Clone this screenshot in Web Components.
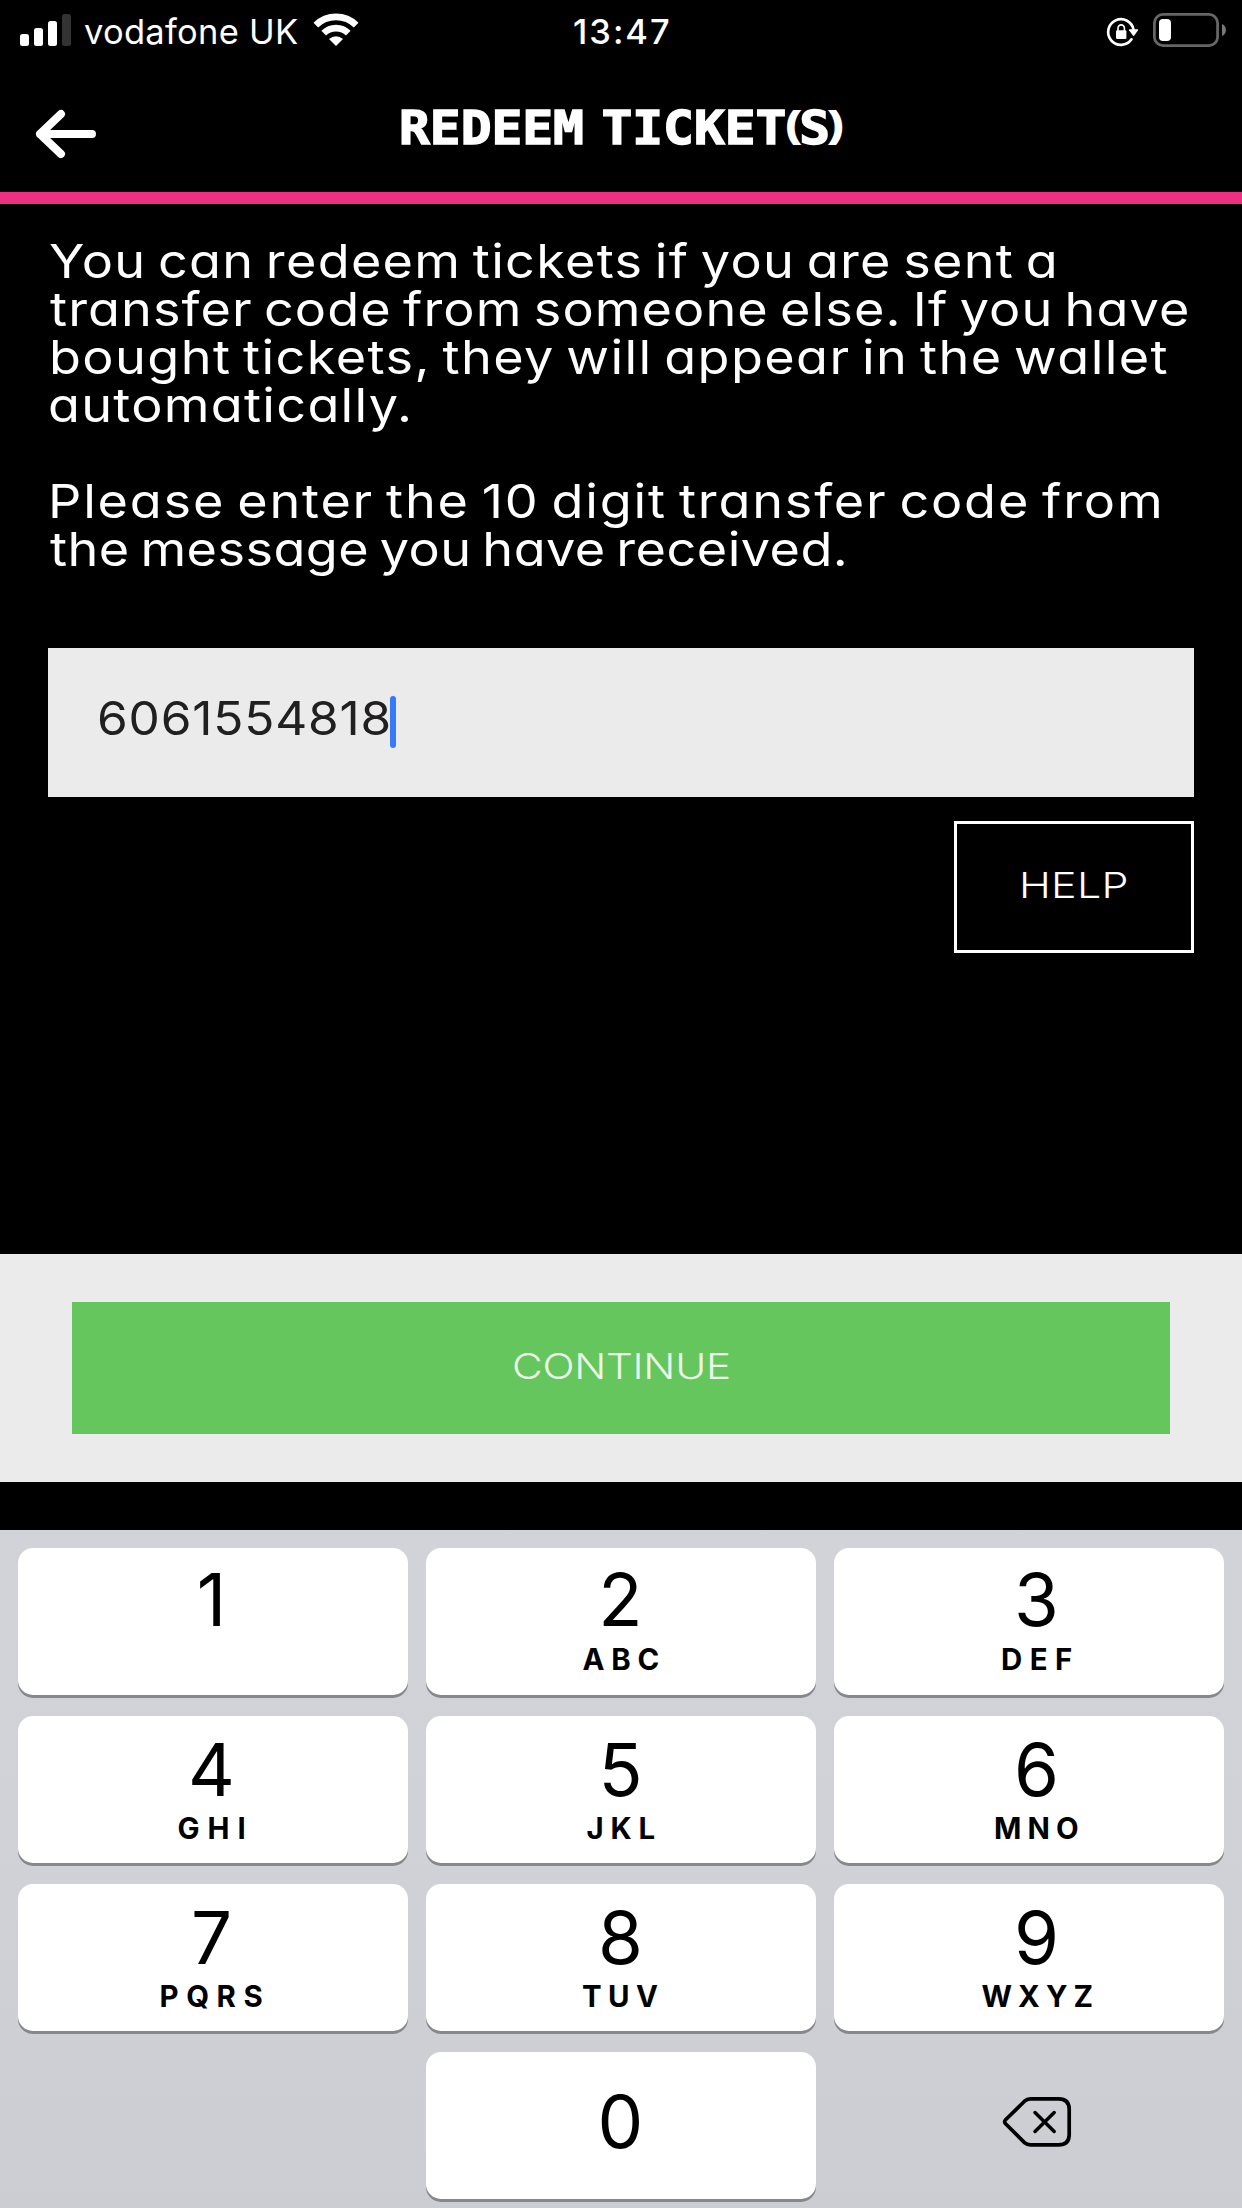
<!DOCTYPE html>
<html lang="en">
<head>
<meta charset="utf-8">
<title>Redeem ticket(s)</title>
<style>
  html, body { margin: 0; padding: 0; background: #000; }
  body { width: 1242px; height: 2208px; overflow: hidden; font-family: Inter, "Liberation Sans", sans-serif; }
</style>
</head>
<body>
<redeem-screen></redeem-screen>

<script>
const define = (name, html, setup) => {
  const tpl = document.createElement('template');
  tpl.innerHTML = html;
  customElements.define(name, class extends HTMLElement {
    constructor() {
      super();
      this.attachShadow({ mode: 'open' }).append(tpl.content.cloneNode(true));
    }
    connectedCallback() { if (setup) setup(this, this.shadowRoot); }
  });
};

/* One line of text tracked so that its ink spans exactly `width` pixels. */
const ctx = document.createElement('canvas').getContext('2d');
define('fit-text', `
  <style>
    :host { display: block; white-space: nowrap; flex: none; }
    span { display: inline-block; transform-origin: 0 50%; }
  </style>
  <span><slot></slot></span>`,
  (el, root) => {
    const span = root.querySelector('span');
    const text = el.textContent;
    const target = +el.getAttribute('width');
    const stretch = +(el.getAttribute('stretch') || 1);
    const cs = getComputedStyle(el);
    ctx.font = `${cs.fontWeight} ${cs.fontSize} ${cs.fontFamily}`;
    const m = ctx.measureText(text);
    const left = -m.actualBoundingBoxLeft;
    const right = m.width - m.actualBoundingBoxRight;
    const ink = span.getBoundingClientRect().width - left - right;
    if (text.length > 1) span.style.letterSpacing = (target / stretch - ink) / (text.length - 1) + 'px';
    span.style.marginLeft = -left * stretch + 'px';
    if (stretch !== 1) span.style.transform = `scaleX(${stretch})`;
    el.style.width = target + 'px';
  });

define('status-bar', `
  <style>
    :host { display: flex; height: 64px; color: #fff; font-size: 34.5px; line-height: 63px; }
    .left { display: flex; width: 574px; padding-left: 20px; box-sizing: border-box; }
    svg { display: block; flex: none; }
    .carrier { margin-left: 12px; }
    .wifi { margin-left: 14px; }
    .time { font-weight: 500; }
    .right { margin-left: auto; display: flex; }
  </style>
  <div class="left">
    <svg width="52" height="64" viewBox="20 0 52 64">
      <g fill="#fff"><rect x="20" y="34" width="9" height="12" rx="2.5"/><rect x="34" y="28" width="9" height="18" rx="2.5"/><rect x="48" y="21" width="9" height="25" rx="2.5"/></g>
      <rect x="62" y="14" width="9" height="32" rx="2.5" fill="#333"/>
    </svg>
    <fit-text class="carrier" width="214">vodafone UK</fit-text>
    <svg class="wifi" width="48" height="64" viewBox="312 0 48 64">
      <g fill="none" stroke="#fff" stroke-width="6.6">
        <path d="M315.8 25.1A28.9 28.9 0 0 1 356.2 25.1"/>
        <path d="M323.7 33.2A17.5 17.5 0 0 1 348.3 33.2"/>
      </g>
      <path d="M336 46L329 38.9Q336 33.4 343 38.9Z" fill="#fff"/>
    </svg>
  </div>
  <fit-text class="time" width="95">13:47</fit-text>
  <div class="right">
    <svg width="142" height="64" viewBox="1100 0 142 64">
      <path d="M1133.6 30A12.8 12.8 0 1 0 1131.5 39.3" fill="none" stroke="#fff" stroke-width="2.7" stroke-linecap="round"/>
      <path d="M1129.6 29.2H1137.4Q1138.6 29.4 1138 30.3L1134.3 35.6Q1133.6 36.4 1132.9 35.6L1129 30.3Q1128.6 29.4 1129.6 29.2Z" fill="#fff"/>
      <rect x="1116" y="30.3" width="10.4" height="8.8" rx="1.3" fill="#fff"/>
      <path d="M1118 31V28.3A3.2 3.4 0 0 1 1124.4 28.3V31" fill="none" stroke="#fff" stroke-width="1.6"/>
      <rect x="1154.4" y="14.4" width="63.2" height="31.2" rx="8.6" fill="none" stroke="#666" stroke-width="2.8"/>
      <rect x="1159" y="19" width="12" height="22" rx="4" fill="#fff"/>
      <path d="M1222 24C1227.3 26 1227.3 34 1222 36Z" fill="#777"/>
    </svg>
  </div>`);

define('nav-header', `
  <style>
    :host { display: flex; height: 128px; border-bottom: 12px solid #ed3082; color: #fff; }
    .back { display: block; flex: none; margin-left: 30px; }
    .title { margin-left: 300px; font: bold 46.2px/128px "DejaVu Sans Mono", monospace; word-spacing: -12px; -webkit-text-stroke: 1.4px #fff; }
    .paren { font: bold 35px/0 "Liberation Sans", sans-serif; vertical-align: 7.5px; -webkit-text-stroke: 2px #fff; }
  </style>
  <svg class="back" width="72" height="128" viewBox="30 64 72 128">
    <path d="M92 134H40M61 114L40 134L61 154" fill="none" stroke="#fff" stroke-width="8" stroke-linecap="round" stroke-linejoin="round"/>
  </svg>
  <fit-text class="title" width="432" stretch="1.11">REDEEM TICKET<span class="paren">(</span>S<span class="paren">)</span></fit-text>`);

define('intro-copy', `
  <style>
    :host { display: block; padding: 33px 0 0 50px; color: #fff; font-size: 46.6px; line-height: 48px; word-spacing: -4px; font-feature-settings: "cv11"; }
    .in { margin-left: 2.5px; }
    .gap { margin-top: 48px; }
  </style>
  <fit-text width="1004" stretch="1.12">You can redeem tickets if you are sent a</fit-text>
  <fit-text width="1137" stretch="1.12">transfer code from someone else. If you have</fit-text>
  <fit-text class="in" width="1115" stretch="1.12">bought tickets, they will appear in the wallet</fit-text>
  <fit-text width="358" stretch="1.12">automatically.</fit-text>
  <fit-text class="in gap" width="1107" stretch="1.12">Please enter the 10 digit transfer code from</fit-text>
  <fit-text width="794" stretch="1.12">the message you have received.</fit-text>`);

define('code-field', `
  <style>
    :host { display: flex; align-items: center; box-sizing: border-box; height: 149px; margin: 0 48px; padding: 0 0 9px 51px; background: #ebebeb; color: #202020; font-size: 46.8px; line-height: 60px; }
    i { width: 6px; height: 52px; border-radius: 3px; background: #367af7; margin: 8px 0 0 1px; }
  </style>
  <fit-text width="290" stretch="1.06">6061554818</fit-text><i></i>`);

define('outline-button', `
  <style>
    :host { display: flex; justify-content: center; align-items: center; box-sizing: border-box; width: 240px; height: 132px; border: 3px solid #fff; padding: 0 0 5px 1px; color: #fff; font-size: 35.8px; line-height: 48px; font-weight: 350; }
  </style>
  <slot></slot>`);

define('action-footer', `
  <style>
    :host { display: flex; box-sizing: border-box; height: 228px; background: #ebebeb; padding: 48px 72px; }
    div { flex: 1; display: flex; justify-content: center; align-items: center; padding-bottom: 5px; background: #65c65d; color: #ebf8ea; font-size: 35.8px; line-height: 48px; font-weight: 350; }
  </style>
  <div><slot></slot></div>`);

define('pad-key', `
  <style>
    :host { display: flex; flex-direction: column; align-items: center; height: 147px; box-sizing: border-box; background: #fff; border-radius: 15px; box-shadow: 0 3px 0 #87888c; color: #000; padding-top: 14px; }
    :host([top]) { padding-top: 12px; }
    :host([zero]) { padding-top: 30px; }
    b { font-weight: 400; font-size: 72.6px; line-height: 80px; }
    fit-text { font-size: 29.4px; font-weight: 650; line-height: 30px; margin-top: 4px; }
    :host([top]) fit-text { margin-top: 5px; }
    b, fit-text { position: relative; left: var(--shift, -0.5px); }
  </style>
  <b><slot></slot></b>`,
  (el, root) => {
    const letters = el.getAttribute('letters');
    if (!letters || root.querySelector('fit-text')) return;
    const f = document.createElement('fit-text');
    f.setAttribute('width', el.getAttribute('span'));
    f.textContent = letters;
    root.append(f);
  });

define('number-pad', `
  <style>
    :host { display: grid; grid-template-columns: repeat(3, 390px); gap: 21px 18px; box-sizing: border-box; height: 678px; padding: 18px; align-content: start; background: linear-gradient(#d2d3d9 0%, #d1d2d8 45%, #cccdd2 100%); }
    .l { --shift: -1.5px; } .r { --shift: 7.5px; }
    svg { display: block; }
  </style>
  <pad-key class="l" top>1</pad-key>
  <pad-key top letters="ABC" span="76">2</pad-key>
  <pad-key class="r" top letters="DEF" span="69">3</pad-key>
  <pad-key class="l" letters="GHI" span="66">4</pad-key>
  <pad-key letters="JKL" span="68">5</pad-key>
  <pad-key class="r" letters="MNO" span="83">6</pad-key>
  <pad-key class="l" letters="PQRS" span="102">7</pad-key>
  <pad-key letters="TUV" span="75">8</pad-key>
  <pad-key class="r" letters="WXYZ" span="110">9</pad-key>
  <span></span>
  <pad-key zero>0</pad-key>
  <svg width="390" height="147" viewBox="834 2052 390 147" fill="none" stroke="#000" stroke-width="3.7" stroke-linecap="round" stroke-linejoin="round">
    <path d="M1005.6 2119.8L1024.5 2101.2Q1027 2098.9 1030.5 2098.9H1058.5Q1069.2 2098.9 1069.2 2109.5V2134.5Q1069.2 2144.9 1058.5 2144.9H1030.5Q1027 2144.9 1024.5 2142.6L1005.6 2123.8Q1003.7 2121.8 1005.6 2119.8Z"/>
    <path d="M1035 2112.5L1054.2 2131.5M1054.2 2112.5L1035 2131.5" stroke-width="3.5"/>
  </svg>`);

define('redeem-screen', `
  <style>
    :host { display: flex; flex-direction: column; width: 1242px; height: 2208px; background: #000; }
    intro-copy { height: 444px; box-sizing: border-box; }
    .help { display: flex; justify-content: flex-end; padding: 24px 48px 0 0; height: 457px; box-sizing: border-box; }
    number-pad { margin-top: 48px; }
  </style>
  <status-bar></status-bar>
  <nav-header></nav-header>
  <intro-copy></intro-copy>
  <code-field></code-field>
  <div class="help"><outline-button><fit-text width="104" stretch="1.2">HELP</fit-text></outline-button></div>
  <action-footer><fit-text width="214" stretch="1.18">CONTINUE</fit-text></action-footer>
  <number-pad></number-pad>`);
</script>
</body>
</html>
